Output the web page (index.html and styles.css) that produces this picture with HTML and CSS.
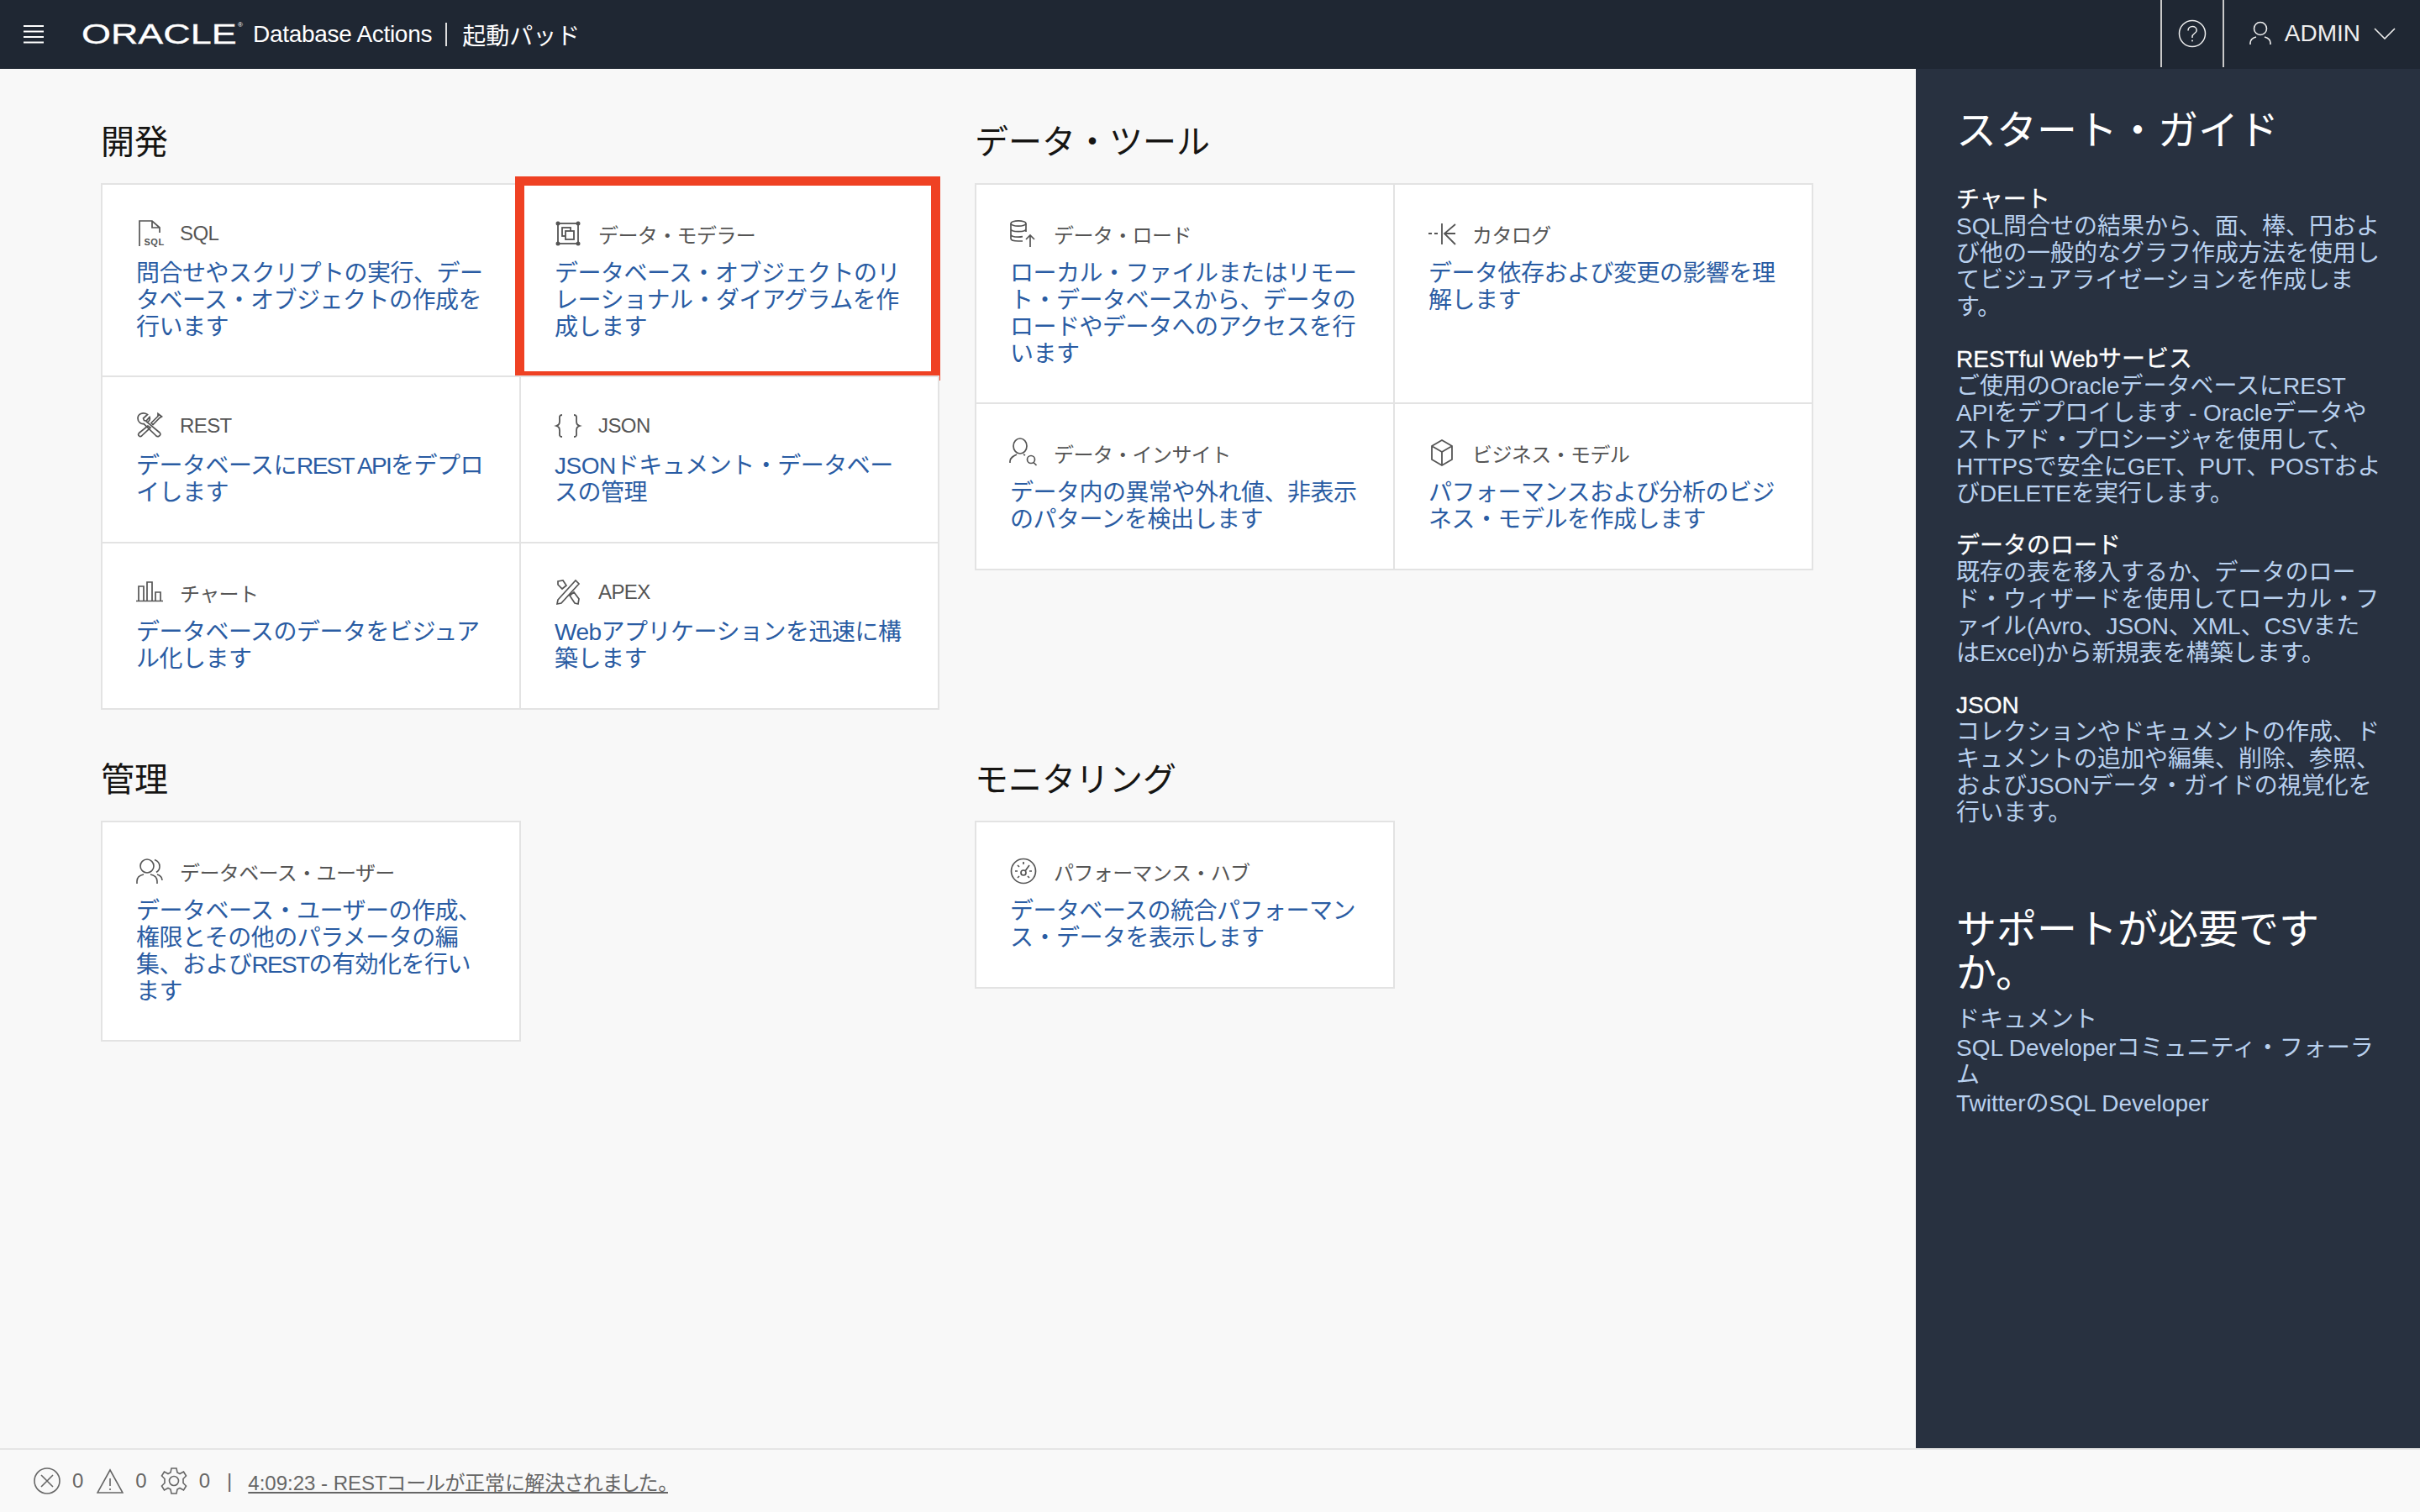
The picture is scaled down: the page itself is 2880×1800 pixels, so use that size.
FILE: index.html
```html
<!DOCTYPE html>
<html lang="ja">
<head>
<meta charset="utf-8">
<title>Database Actions</title>
<link rel="stylesheet" href="styles.css">
</head>
<body>
<header class="topbar">
  <svg class="menu" width="24" height="22" viewBox="0 0 24 22"><path d="M0 1h24M0 7.5h24M0 14h24M0 20.5h24" stroke="#fff" stroke-width="2" fill="none"/></svg>
  <span class="logo"><span class="logo-word">ORACLE</span><span class="logo-r">®</span></span>
  <span class="app">Database Actions</span>
  <span class="bar"></span>
  <span class="page">起動パッド</span>
  <div class="top-right">
    <div class="help">
      <svg width="34" height="34" viewBox="0 0 34 34" fill="none" stroke="#eee" stroke-width="1.5"><circle cx="17" cy="17" r="15.5"/><path d="M12 13.5c0-3 2.3-5 5.2-5 2.8 0 5 1.900 5 4.400 0 2-1.200 3-2.800 4.100-1.500 1-2.400 2-2.400 3.800v1.200"/><circle cx="17" cy="25.500" r="1" fill="#eee" stroke="none"/></svg>
    </div>
    <div class="user">
      <svg width="26" height="30" viewBox="0 0 26 30" fill="none" stroke="#eee" stroke-width="1.6"><circle cx="13" cy="9" r="7.500"/><path d="M1 28v-2c0-4 3.500-6 7-7M25 28v-2c0-4-3.500-6-7-7"/></svg>
      <span>ADMIN</span>
      <svg width="26" height="14" viewBox="0 0 26 14" fill="none" stroke="#eee" stroke-width="1.6"><path d="M1 1l12 12L25 1"/></svg>
    </div>
  </div>
</header>

<div class="layout">
  <main class="content">
    <section class="group">
      <h2>開発</h2>
      <div class="cards">
        <a class="card">
          <div class="title">
            <svg class="ico" viewBox="0 0 32 32" fill="none" stroke="#555" stroke-width="1.700"><path d="M4 31V1h15l9 8v6M19 1v8h9"/><text x="9.500" y="29.500" class="sql-ico">SQL</text></svg>
            <span>SQL</span>
          </div>
          <p>問合せやスクリプトの実行、デー<br>タベース・オブジェクトの作成を<br>行います</p>
        </a>
        <a class="card">
          <div class="title">
            <svg class="ico" viewBox="0 0 32 32" fill="none" stroke="#555" stroke-width="1.800"><rect x="4" y="4" width="24" height="24"/><rect x="9" y="9" width="10" height="10"/><rect x="13" y="13" width="10" height="10" fill="#fff"/><g fill="#555" stroke="none"><circle cx="4" cy="4" r="2.500"/><circle cx="28" cy="4" r="2.500"/><circle cx="4" cy="28" r="2.500"/><circle cx="28" cy="28" r="2.500"/></g></svg>
            <span>データ・モデラー</span>
          </div>
          <p>データベース・オブジェクトのリ<br>レーショナル・ダイアグラムを作<br>成します</p>
          <span class="highlight"></span>
        </a>
        <a class="card">
          <div class="title">
            <svg class="ico" viewBox="0 0 32 32" fill="none" stroke="#555" stroke-width="1.700"><path d="M13.500 2.500L8.500 7l1 2.500 2.500.5 4-4.500c1 3-.5 5.500-3 6L28 24c1.500 1.500 1 3-.5 4s-3 1-4-.5L9 13.500c-3 .5-7-2-7-6.500 0-5 6-8 11.500-4.500z"/><path d="M26 1.500L30.500 5 28 6.500l-8 8-2-2 8-8zM14 16L3.500 24.500c-1.500 1.500-1 2.500 0 3.500s2.500 1 3.500-.5L17 18z"/></svg>
            <span>REST</span>
          </div>
          <p>データベースに<span class="tight">REST API</span>をデプロ<br>イします</p>
        </a>
        <a class="card">
          <div class="title">
            <svg class="ico" viewBox="0 0 32 32" fill="none" stroke="#555" stroke-width="1.800"><path d="M9 3C5 3 6 6 6 10s-1 5-4 6c3 1 4 2 4 6s-1 7 3 7M23 3c4 0 3 3 3 7s1 5 4 6c-3 1-4 2-4 6s1 7-3 7"/></svg>
            <span>JSON</span>
          </div>
          <p>JSONドキュメント・データベー<br>スの管理</p>
        </a>
        <a class="card">
          <div class="title">
            <svg class="ico" viewBox="0 0 32 32" fill="none" stroke="#555" stroke-width="1.700"><path d="M0 26.500h32M3 26V9h6v17M13 26V4h6v22M23 26V16h6v10"/></svg>
            <span>チャート</span>
          </div>
          <p>データベースのデータをビジュア<br>ル化します</p>
        </a>
        <a class="card">
          <div class="title">
            <svg class="ico" viewBox="0 0 32 32" fill="none" stroke="#555" stroke-width="1.700"><path d="M4 25L25 2l4 4L8 29l-5 1zM4 3l6-1 4 6-5 4-5-5zM18 20l5-4 6 8-1 6-4-1z"/></svg>
            <span>APEX</span>
          </div>
          <p>Webアプリケーションを迅速に構<br>築します</p>
        </a>
      </div>
    </section>

    <section class="group">
      <h2>データ・ツール</h2>
      <div class="cards">
        <a class="card">
          <div class="title">
            <svg class="ico" viewBox="0 0 32 32" fill="none" stroke="#555" stroke-width="1.700"><ellipse cx="10" cy="4" rx="9" ry="3.200"/><path d="M1 4v18c0 2 3.500 3 9 3h5M19 4v10M1 10.500c0 2 3.500 3.200 9 3.200s9-1.200 9-3.200M1 17c0 2 3.500 3.200 9 3.200 1.500 0 3-.1 5-.5"/><path d="M24 32V18M19 23l5-5 5 5"/></svg>
            <span>データ・ロード</span>
          </div>
          <p>ローカル・ファイルまたはリモー<br>ト・データベースから、データの<br>ロードやデータへのアクセスを行<br>います</p>
        </a>
        <a class="card">
          <div class="title">
            <svg class="ico" viewBox="0 0 32 32" fill="none" stroke="#555" stroke-width="1.800"><path d="M0 16h4M7 16h4M16 4v25M32 5L19 16l13 13M19 16h13"/></svg>
            <span>カタログ</span>
          </div>
          <p>データ依存および変更の影響を理<br>解します</p>
        </a>
        <a class="card">
          <div class="title">
            <svg class="ico" viewBox="0 0 32 32" fill="none" stroke="#555" stroke-width="1.700"><ellipse cx="12" cy="8" rx="8" ry="9"/><path d="M0 28v-2c0-4 4-6 8-8M16 18l2 1"/><circle cx="25" cy="24" r="4.500"/><path d="M28 27.500l3.500 3.500"/></svg>
            <span>データ・インサイト</span>
          </div>
          <p>データ内の異常や外れ値、非表示<br>のパターンを検出します</p>
        </a>
        <a class="card">
          <div class="title">
            <svg class="ico" viewBox="0 0 32 32" fill="none" stroke="#555" stroke-width="1.800"><path d="M16 1l12 7v16l-12 7-12-7V8zM4 8l12 7 12-7M16 15v16"/></svg>
            <span>ビジネス・モデル</span>
          </div>
          <p>パフォーマンスおよび分析のビジ<br>ネス・モデルを作成します</p>
        </a>
      </div>
    </section>

    <section class="group">
      <h2>管理</h2>
      <div class="cards">
        <a class="card">
          <div class="title">
            <svg class="ico" viewBox="0 0 32 32" fill="none" stroke="#555" stroke-width="1.600"><circle cx="13" cy="10" r="8"/><path d="M1 31v-3c0-4 3-7 8-8M25 31v-3c0-4-3-7-8-8M22 2.500c4 1.500 6 4 6 8 0 3-1.500 5.500-4 7M25 20c3 1 6 3.500 6 7"/></svg>
            <span>データベース・ユーザー</span>
          </div>
          <p>データベース・ユーザーの作成、<br>権限とその他のパラメータの編<br>集、および<span class="tight">REST</span>の有効化を行い<br>ます</p>
        </a>
      </div>
    </section>

    <section class="group">
      <h2>モニタリング</h2>
      <div class="cards">
        <a class="card">
          <div class="title">
            <svg class="ico" viewBox="0 0 32 32" fill="none" stroke="#555" stroke-width="1.700"><circle cx="16" cy="16" r="14.500"/><circle cx="16" cy="18" r="3"/><path d="M18 16l5-7M16 5v3M6 16h3M23 16h3M9 9l2 2M9 24l2-2M23 24l-2-2"/></svg>
            <span>パフォーマンス・ハブ</span>
          </div>
          <p>データベースの統合パフォーマン<br>ス・データを表示します</p>
        </a>
      </div>
    </section>
  </main>

  <aside class="side">
    <h2 class="side-title">スタート・ガイド</h2>
    <div class="guide"><h3>チャート</h3><p>SQL問合せの結果から、面、棒、円および他の一般的なグラフ作成方法を使用してビジュアライゼーションを作成します。</p></div>
    <div class="guide"><h3>RESTful Webサービス</h3><p>ご使用のOracleデータベースにREST APIをデプロイします - Oracleデータやストアド・プロシージャを使用して、HTTPSで安全にGET、PUT、POSTおよびDELETEを実行します。</p></div>
    <div class="guide"><h3>データのロード</h3><p>既存の表を移入するか、データのロード・ウィザードを使用してローカル・ファイル(Avro、JSON、XML、CSVまたはExcel)から新規表を構築します。</p></div>
    <div class="guide"><h3>JSON</h3><p>コレクションやドキュメントの作成、ドキュメントの追加や編集、削除、参照、およびJSONデータ・ガイドの視覚化を行います。</p></div>
    <h2 class="side-help">サポートが必要ですか。</h2>
    <ul class="links">
      <li>ドキュメント</li>
      <li>SQL Developerコミュニティ・フォーラム</li>
      <li>TwitterのSQL Developer</li>
    </ul>
  </aside>
</div>

<footer class="status">
  <svg width="32" height="32" viewBox="0 0 32 32" fill="none" stroke="#666" stroke-width="1.600"><circle cx="16" cy="16" r="15"/><path d="M9 9l14 14M23 9L9 23"/></svg>
  <span class="n">0</span>
  <svg width="32" height="30" viewBox="0 0 32 30" fill="none" stroke="#666" stroke-width="1.600"><path d="M16 2l15 27H1zM16 12v9M16 24v2"/></svg>
  <span class="n">0</span>
  <svg width="32" height="32" viewBox="0 0 32 32" fill="none" stroke="#666" stroke-width="1.600"><circle cx="16" cy="16" r="5.500"/><path d="M13 1h6l1 5 3 1.500 4.500-2.500 3 5-3.500 3.500v5l3.500 3.500-3 5-4.500-2.500L20 26l-1 5h-6l-1-5-3-1.500L4.500 27l-3-5L5 18.500v-5L1.500 10l3-5L9 7.500 12 6z"/></svg>
  <span class="n">0</span>
  <span class="sep">|</span>
  <a class="msg">4:09:23 - RESTコールが正常に解決されました。</a>
</footer>
</body>
</html>
```
FILE: styles.css
```css
* { box-sizing: border-box; }
html, body { margin: 0; height: 100%; }
body {
  display: flex;
  flex-direction: column;
  height: 100vh;
  font-family: "Liberation Sans", "Noto Sans CJK JP", sans-serif;
  background: #f8f8f8;
  overflow: hidden;
}
h2, h3, p, ul { margin: 0; padding: 0; font-weight: 400; }

.topbar {
  flex: none;
  height: 82px;
  display: flex;
  align-items: center;
  background: #1f2733;
  color: #fff;
  padding-left: 28px;
  font-size: 28px;
}
.menu { flex: none; margin-right: 45px; }
.logo { width: 204px; display: flex; align-items: flex-start; height: 38px; position: relative; }
.logo-word {
  font-size: 33px;
  line-height: 38px;
  transform: scaleX(1.36);
  transform-origin: left center;
  display: block;
  -webkit-text-stroke: 0.3px #fff;
}
.logo-r { position: absolute; left: 186px; top: 3px; font-size: 8px; }
.app { letter-spacing: -0.3px; }
.bar { width: 2px; height: 28px; background: #ddd; margin: 0 18px 0 16px; }
.top-right { margin-left: auto; display: flex; height: 80px; align-self: flex-start; }
.help {
  width: 76px;
  display: flex;
  align-items: center;
  justify-content: center;
  border-left: 2px solid #c9c9c9;
  border-right: 2px solid #c9c9c9;
}
.user { display: flex; align-items: center; padding-left: 30px; padding-right: 29px; gap: 16px; color: #eee; }

.layout { flex: 1; display: flex; min-height: 0; }
.content {
  flex: 1;
  display: grid;
  grid-template-columns: 998px 998px;
  column-gap: 42px;
  row-gap: 61px;
  align-content: start;
  padding: 63px 0 0 120px;
}
.group h2 {
  font-size: 40px;
  line-height: 48px;
  color: #161513;
  margin-bottom: 25px;
}
.cards {
  display: grid;
  grid-template-columns: 500px 498px;
}
.card {
  position: relative;
  background: #fff;
  border: 2px solid #e3e3e3;
  margin: 0 0 -2px 0;
  padding: 42px 30px 41px 40px;
  min-height: 200px;
}
.card:nth-child(even) { margin-left: -2px; }
.title {
  display: flex;
  align-items: center;
  gap: 20px;
  height: 32px;
  font-size: 24px;
  letter-spacing: -0.6px;
  color: #555;
  margin-bottom: 16px;
}
.ico { width: 32px; height: 32px; flex: none; overflow: visible; }
.sql-ico { font-size: 11px; font-weight: 700; stroke: none; fill: #555; letter-spacing: 0.5px; font-family: "Liberation Sans", sans-serif; }
.card p {
  font-size: 28px;
  line-height: 32px;
  letter-spacing: -0.5px;
  color: #2a5ca3;
  white-space: nowrap;
}
.tight { letter-spacing: -1.7px; }
.highlight {
  position: absolute;
  top: -10px;
  left: -7px;
  right: -3px;
  bottom: -6px;
  border: 11px solid #ef4123;
}

.side {
  flex: none;
  width: 600px;
  background: #283140;
  color: #fff;
  padding: 44px 44px 0 48px;
}
.side-title { font-size: 48px; line-height: 60px; margin-bottom: 36px; }
.guide { margin-bottom: 30px; font-size: 28px; line-height: 32px; }
.guide h3 { font-size: 28px; line-height: 32px; font-weight: 400; -webkit-text-stroke: 0.3px #fff; }
.guide p { color: #b8d0ee; }
.side-help { font-size: 48px; line-height: 52px; margin-top: 97px; margin-bottom: 13px; }
.links { list-style: none; color: #b8d0ee; font-size: 28px; line-height: 32px; }
.links li { margin-bottom: 2px; }

.status {
  flex: none;
  height: 76px;
  display: flex;
  align-items: center;
  background: #f9f9f9;
  border-top: 2px solid #e5e5e5;
  padding-left: 40px;
  color: #666;
  font-size: 24px;
}
.n { margin: 0 16px 0 14px; }
.sep { margin: 0 19px 0 4px; }
.msg { text-decoration: underline; font-size: 24px; font-feature-settings: "palt"; }
```
